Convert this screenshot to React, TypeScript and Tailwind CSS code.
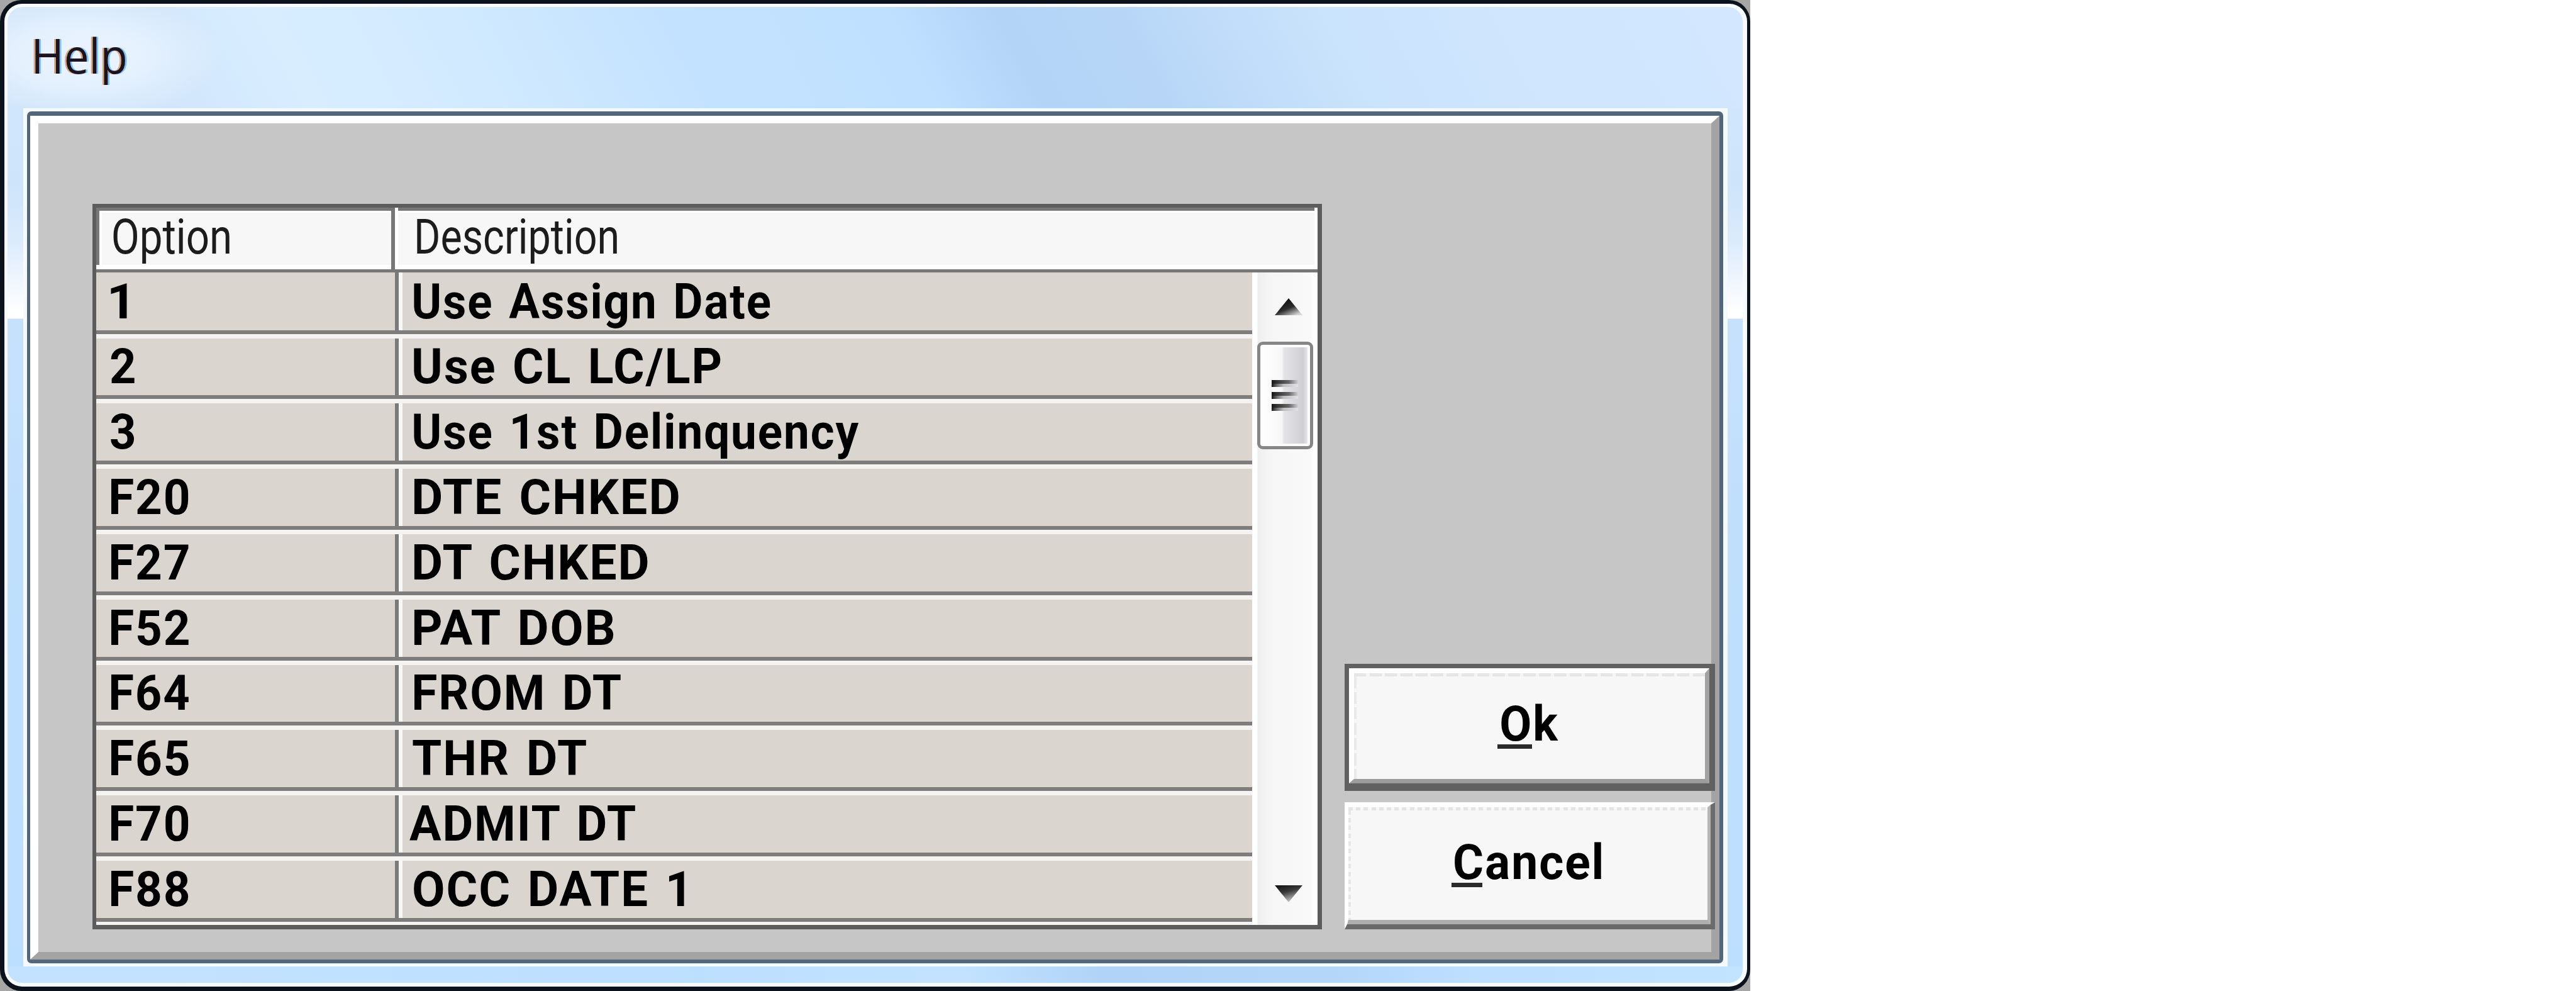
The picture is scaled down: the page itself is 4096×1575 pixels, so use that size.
import { useLayoutEffect, useRef, useState } from "react";

type LabelProps = { text: string; ink: number; className: string };

// Single-line text condensed or stretched so that its visible glyphs span exactly `ink` pixels.
function Label({ text, ink, className }: LabelProps) {
  const ref = useRef<HTMLSpanElement>(null);
  const [fit, setFit] = useState({ scale: 1, shift: 0 });

  useLayoutEffect(() => {
    const ctx = document.createElement("canvas").getContext("2d");
    if (!ref.current || !ctx) return;
    const s = getComputedStyle(ref.current);
    ctx.font = `${s.fontWeight} ${s.fontSize} ${s.fontFamily}`;
    const m = ctx.measureText(text);
    const gaps = (parseFloat(s.wordSpacing) || 0) * (text.split(" ").length - 1);
    const tracking = (parseFloat(s.letterSpacing) || 0) * (text.length - 1);
    const scale = ink / (m.actualBoundingBoxLeft + m.actualBoundingBoxRight + gaps + tracking);
    setFit({ scale, shift: m.actualBoundingBoxLeft * scale });
  }, [text, ink]);

  return (
    <div className="whitespace-pre" style={{ width: ink }}>
      <span
        ref={ref}
        className={`inline-block origin-left ${className}`}
        style={{ transform: `translateX(${fit.shift}px) scaleX(${fit.scale})` }}
      >
        {text}
      </span>
    </div>
  );
}

const rows = [
  { option: "1", ow: 26, text: "Use Assign Date", tw: 567, pad: "pl-[18px]" },
  { option: "2", ow: 38, text: "Use CL LC/LP", tw: 488, pad: "pl-[18px]" },
  { option: "3", ow: 38, text: "Use 1st Delinquency", tw: 708, pad: "pl-[18px]" },
  { option: "F20", ow: 124, text: "DTE CHKED", tw: 421, pad: "pl-[18px]" },
  { option: "F27", ow: 124, text: "DT CHKED", tw: 374, pad: "pl-[18px]" },
  { option: "F52", ow: 124, text: "PAT DOB", tw: 320, pad: "pl-[18px]" },
  { option: "F64", ow: 124, text: "FROM DT", tw: 329, pad: "pl-[18px]" },
  { option: "F65", ow: 124, text: "THR DT", tw: 276, pad: "pl-[16px]" },
  { option: "F70", ow: 124, text: "ADMIT DT", tw: 361, pad: "pl-[11px]" },
  { option: "F88", ow: 124, text: "OCC DATE 1", tw: 430, pad: "pl-[18px]" },
];

const bold =
  "font-[Roboto,sans-serif] text-[78px] font-bold leading-[90px] tracking-[2px] [word-spacing:5px] text-black";
const regular =
  "font-[Roboto,sans-serif] text-[78px] font-normal leading-[83px] text-[#1c1c1c]";

function Table() {
  return (
    <div className="flex h-[1153px] w-[1955px] shrink-0 flex-col border-t-[6px] border-r-[7px] border-b-[7px] border-l-[6px] border-[#5c5c5c] bg-[#f7f7f7]">
      <div className="flex h-[103px] shrink-0 border-b-[5px] border-[#787878]">
        <div className="flex w-[469px] flex-col">
          <div className="h-[91px] border-t-[5px] border-l-[5px] border-t-[#777] border-l-[#777]">
            <div className="h-full border-t-[3px] border-l-[4px] border-white pl-[18px]">
              <div className="-mt-[3px]">
                <Label text="Option" ink={185} className={regular} />
              </div>
            </div>
          </div>
          <div className="h-[7px] bg-white" />
        </div>
        <div className="w-[6px] bg-[#777]" />
        <div className="w-[5px] bg-white" />
        <div className="flex flex-1 flex-col border-t-[5px] border-[#777]">
          <div className="h-[86px] border-t-[3px] border-white pl-[30px]">
            <div className="-mt-[3px]">
              <Label text="Description" ink={318} className={regular} />
            </div>
          </div>
          <div className="h-[7px] bg-white" />
        </div>
        <div className="w-[5px] bg-white" />
      </div>
      <div className="flex min-h-0 flex-1">
        <div className="w-[1838px] bg-[#f4f3f1]">
          {rows.map((r, i) => (
            <div
              key={r.option}
              className={
                i === 0
                  ? "flex h-[97.7px] border-b-[6px] border-[#7d7d7d]"
                  : "flex h-[103.8px] border-b-[6px] border-[#7d7d7d] pt-[7px]"
              }
            >
              <div className="flex w-[475px] items-end bg-[#dad6cf] pl-[23px]">
                <Label text={r.option} ink={r.ow} className={bold} />
              </div>
              <div className="w-[6px] bg-[#7a7a7a]" />
              <div className="w-[6px] bg-[#f8f8f7]" />
              <div className={`flex flex-1 items-end bg-[#dad6cf] ${r.pad}`}>
                <Label text={r.text} ink={r.tw} className={bold} />
              </div>
            </div>
          ))}
        </div>
        <div className="flex flex-1 flex-col items-start bg-[linear-gradient(90deg,#ffffff_0px,#ffffff_8px,#eeeeee_9px,#f6f6f6_30px,#f9f9f9_92px,#ffffff_98px)] pl-[8px]">
          <div className="h-[110px] w-[90px] pt-[41px] pl-[28px]">
            <svg className="h-[27px] w-[44px]" viewBox="0 0 44 27">
              <defs>
                <linearGradient id="up" x1="0.2" y1="0.2" x2="0.75" y2="1">
                  <stop offset="0" stopColor="#111" />
                  <stop offset="0.5" stopColor="#2c2c2c" />
                  <stop offset="1" stopColor="#d4d4d4" />
                </linearGradient>
              </defs>
              <path d="M22 0 L44 27 H0 Z" fill="url(#up)" />
            </svg>
          </div>
          <div className="flex h-[171px] w-[89px] flex-col gap-[7px] rounded-[9px] border-[5px] border-[#868686] bg-[linear-gradient(90deg,#ffffff_0px,#f7f7f8_34px,#e2e2e7_38px,#cfcfd4_68px,#e8e8ea_75px,#fafafa_79px)] pt-[56px] pl-[18px] shadow-[inset_0_0_0_4px_#fbfbfb]">
            {[0, 1, 2].map((n) => (
              <svg key={n} className="h-[12px] w-[42px]" viewBox="0 0 42 12">
                <defs>
                  <linearGradient id="grip" x1="0" y1="0" x2="1" y2="0">
                    <stop offset="0" stopColor="#161616" />
                    <stop offset="0.2" stopColor="#333" />
                    <stop offset="0.65" stopColor="#666" />
                    <stop offset="1" stopColor="#d0d0d4" />
                  </linearGradient>
                  <linearGradient id="gripShade" x1="0" y1="0" x2="1" y2="0">
                    <stop offset="0" stopColor="#161616" />
                    <stop offset="0.2" stopColor="#6e6e6e" />
                    <stop offset="0.45" stopColor="#bdbdbd" />
                    <stop offset="1" stopColor="#e2e2e6" />
                  </linearGradient>
                </defs>
                <rect width="42" height="6" fill="url(#grip)" />
                <rect y="6" width="42" height="5" fill="url(#gripShade)" />
              </svg>
            ))}
          </div>
          <div className="mt-auto h-[63px] w-[90px] pl-[28px]">
            <svg className="h-[27px] w-[44px]" viewBox="0 0 44 27">
              <defs>
                <linearGradient id="down" x1="0.2" y1="0" x2="0.65" y2="1">
                  <stop offset="0" stopColor="#151515" />
                  <stop offset="0.4" stopColor="#3a3a3a" />
                  <stop offset="1" stopColor="#d8d8d8" />
                </linearGradient>
              </defs>
              <path d="M0 0 H44 L22 27 Z" fill="url(#down)" />
            </svg>
          </div>
        </div>
      </div>
    </div>
  );
}

function Buttons() {
  return (
    <div className="flex h-[1153px] w-[589px] shrink-0 flex-col justify-end gap-[18px]">
      <button className="h-[202px] border-t-[7px] border-r-[9px] border-b-[12px] border-l-[7px] border-[#616161]">
        <div className="flex h-full flex-col border-t-[8px] border-r-[7px] border-b-[7px] border-l-[8px] border-t-white border-r-[#a2a2a2] border-b-[#9c9c9c] border-l-white bg-[#f7f7f7]">
          <div className="h-[5px] bg-[repeating-linear-gradient(90deg,#e6e6e6_0px,#e6e6e6_19px,#f5f5f5_19px,#f5f5f5_24.5px)]" />
          <div className="flex flex-1">
            <div className="w-[4px] bg-[repeating-linear-gradient(180deg,#e9e9e9_0px,#e9e9e9_19px,#f5f5f5_19px,#f5f5f5_24.5px)]" />
            <div className="pt-[31px] pl-[230px] text-left">
              <div className="relative w-[91px]">
                <Label text="Ok" ink={91} className={bold} />
                <div className="absolute top-[77px] -left-[6px] h-[7px] w-[55px] bg-[#2b2b2b]" />
              </div>
            </div>
          </div>
        </div>
      </button>
      <button className="h-[202px] border-t-[4px] border-r-[7px] border-b-[8px] border-l-[4px] border-t-white border-r-[#6c6c6c] border-b-[#6a6a6a] border-l-white">
        <div className="flex h-full flex-col border-t-[4px] border-r-[5px] border-b-[7px] border-l-[2px] border-t-white border-r-[#b5b5b5] border-b-[#aeaeae] border-l-white bg-[#f7f7f7]">
          <div className="h-[5px] bg-[repeating-linear-gradient(90deg,#e4e4e4_0px,#e4e4e4_7px,#f7f7f7_7px,#f7f7f7_12.2px)]" />
          <div className="flex flex-1">
            <div className="w-[4px] bg-[repeating-linear-gradient(180deg,#e6e6e6_0px,#e6e6e6_7px,#f7f7f7_7px,#f7f7f7_12.2px)]" />
            <div className="pt-[38px] pl-[165px] text-left">
              <div className="relative w-[234px]">
                <Label text="Cancel" ink={233} className={bold} />
                <div className="absolute top-[77px] -left-[5px] h-[7px] w-[49px] bg-[#2b2b2b]" />
              </div>
            </div>
          </div>
        </div>
      </button>
    </div>
  );
}

const side =
  "bg-[linear-gradient(180deg,#cfe6fc_0px,#cde4fa_120px,#dbebfc_210px,#ffffff_325px,#ffffff_334px,#c6e1fc_335px,#bfdffd_700px,#bddfff_100%)]";

export default function App() {
  return (
    <div className="h-[1575px] w-[4096px] overflow-hidden bg-white">
      <div className="h-[1575px] w-[2783px] bg-[#a6a6a6]">
        <div className="h-full rounded-[34px] border-t-[6px] border-r-[5px] border-b-[7px] border-l-[7px] border-[#0b121c] bg-[#0b121c]">
          <div className="flex h-full flex-col overflow-hidden rounded-[28px] border-t-[5px] border-r-[7px] border-b-[6px] border-l-[5px] border-[#f7fbff] bg-[#f7fbff]">
            <div className="h-[161px] shrink-0 rounded-t-[24px] bg-[radial-gradient(ellipse_230px_100px_at_115px_78px,#f2f8ffcc,#f2f8ff99_45%,#ffffff00),linear-gradient(62deg,#cfe4fa_0%,#d2e7fc_11%,#d8eeff_17%,#d3ebff_25%,#c3e2ff_40%,#bfe0ff_52%,#b3d4f7_58%,#b7d6f7_65%,#cae3fc_76%,#d0e6fe_90%,#d3e8ff_100%)] pt-[27px] pl-[44px]">
              <Label
                text="Help"
                ink={143}
                className="font-['Open_Sans',sans-serif] text-[77px] leading-[100px] font-normal text-[#1b1420] [text-shadow:-3px_0_0_#d0702090,3px_0_0_#2aa0ff90]"
              />
            </div>
            <div className="flex h-[1364px] shrink-0">
              <div className={`w-[25px] ${side}`} />
              <div className="w-[2710px] rounded-[10px] border-t-[5px] border-r-[7px] border-b-[5px] border-l-[6px] border-[#f4faff] bg-[#f4faff]">
                <div className="h-full overflow-hidden rounded-[7px] border-t-[7px] border-r-[6px] border-b-[6px] border-l-[5px] border-[#52677b]">
                  <div className="h-full border-t-[12px] border-r-[13px] border-b-[12px] border-l-[13px] border-t-white border-r-[#a3a3a3] border-b-[#a3a3a3] border-l-white bg-[#c6c6c6] pt-[128px] pl-[86px]">
                    <div className="flex gap-[36px]">
                      <Table />
                      <Buttons />
                    </div>
                  </div>
                </div>
              </div>
              <div className={`w-[24px] ${side}`} />
            </div>
            <div className="flex-1 bg-[linear-gradient(80deg,#c3e2ff_0%,#bddfff_40%,#c2e2ff_55%,#b0d3f7_63%,#b3d6f9_76%,#bddeff_84%,#c2e4ff_100%)]" />
          </div>
        </div>
      </div>
    </div>
  );
}
